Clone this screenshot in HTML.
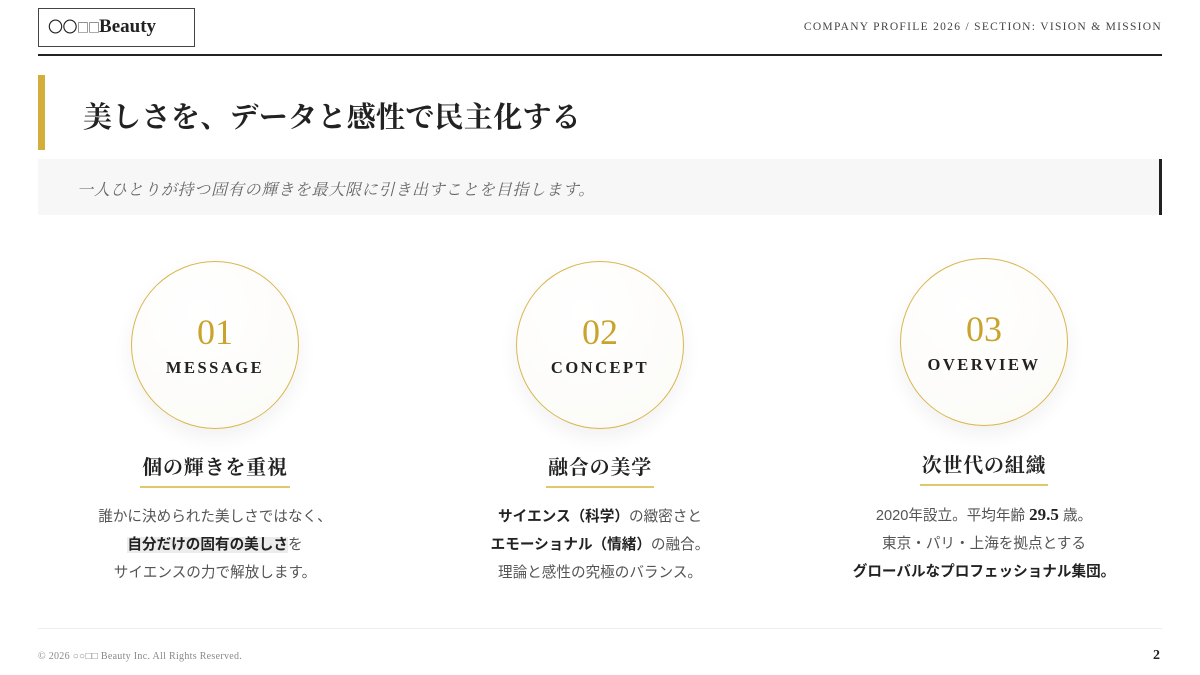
<!DOCTYPE html>
<html><head><meta charset="utf-8"><style>
*{margin:0;padding:0;box-sizing:border-box}
body{width:1200px;height:675px;background:#fff;position:relative;overflow:hidden;font-family:"Liberation Serif","Noto Serif CJK SC",serif;color:#222}
.a{position:absolute}
.logo{left:38px;top:8px;width:157px;height:39px;border:1px solid #444;font-size:19px;font-weight:bold;line-height:36px;padding-left:9px;color:#222;white-space:nowrap}
.logo .o{font-family:"Noto Sans CJK JP",sans-serif;font-weight:normal;font-size:15px;letter-spacing:-0.5px}
.logo .s{font-family:"Noto Sans CJK JP",sans-serif;font-weight:normal;font-size:12px;letter-spacing:-1px}
.hdr{right:38px;top:21px;font-size:11.5px;letter-spacing:1.3px;color:#444}
.hline{left:38px;top:54px;width:1124px;height:2px;background:#222}
.gbar{left:38px;top:75px;width:7px;height:75px;background:#d4ae3b}
.title{left:83px;top:95px;font-size:29px;font-weight:bold;letter-spacing:0.3px;color:#222}
.band{left:38px;top:159px;width:1124px;height:56px;background:#f7f7f7}
.band:after{content:"";position:absolute;right:0;top:0;width:3px;height:56px;background:#222}
.sub{left:77px;top:177px;font-size:16px;font-style:italic;color:#666;letter-spacing:0.75px}
.c{width:168px;height:168px;border-radius:50%;border:1.5px solid #d8b74f;background:radial-gradient(circle at 40% 30%,#fff,#fbfaf6);box-shadow:0 8px 20px rgba(0,0,0,0.06);text-align:center}
.num{position:absolute;left:0;right:0;top:52px;font-size:36px;color:#c9a32c;line-height:1}
.lab{position:absolute;left:0;right:0;top:98px;font-size:16.5px;letter-spacing:2.5px;color:#222;font-weight:bold;line-height:1}
.col{width:360px;text-align:center}
.h{font-size:20px;font-weight:bold;letter-spacing:0.8px;display:inline-block;padding:0 2px 5px;border-bottom:2px solid #e0c770;line-height:26px;color:#222}
.body{margin-top:15px;font-family:"Liberation Sans","Noto Sans CJK JP",sans-serif;font-size:14.6px;line-height:28px;color:#555}
.body b{color:#222}
.hl{background:#ececec}
.fline{left:38px;top:628px;width:1124px;height:1px;background:#eee}
.foot{left:38px;top:651px;font-size:10px;color:#888;letter-spacing:0.3px}
.pg{right:40px;top:648px;font-size:14px;font-weight:bold;color:#222}
</style></head><body>
<div class="a logo"><span class="o">〇〇</span><span class="s">□□</span>Beauty</div>
<div class="a hdr">COMPANY PROFILE 2026 / SECTION: VISION &amp; MISSION</div>
<div class="a hline"></div>
<div class="a gbar"></div>
<div class="a title">美しさを、データと感性で民主化する</div>
<div class="a band"></div>
<div class="a sub">一人ひとりが持つ固有の輝きを最大限に引き出すことを目指します。</div>

<div class="a c" style="left:131px;top:261px"><div class="num">01</div><div class="lab">MESSAGE</div></div>
<div class="a c" style="left:516px;top:261px"><div class="num">02</div><div class="lab">CONCEPT</div></div>
<div class="a c" style="left:900px;top:258px"><div class="num">03</div><div class="lab">OVERVIEW</div></div>

<div class="a col" style="left:35px;top:455px"><div class="h">個の輝きを重視</div>
<div class="body">誰かに決められた美しさではなく、<br><b class="hl">自分だけの固有の美しさ</b>を<br>サイエンスの力で解放します。</div></div>
<div class="a col" style="left:420px;top:455px"><div class="h">融合の美学</div>
<div class="body"><b>サイエンス（科学）</b>の緻密さと<br><b>エモーショナル（情緒）</b>の融合。<br>理論と感性の究極のバランス。</div></div>
<div class="a col" style="left:804px;top:453px"><div class="h">次世代の組織</div>
<div class="body">2020年設立。平均年齢 <b style="font-family:'Liberation Serif',serif;font-size:17px">29.5</b> 歳。<br>東京・パリ・上海を拠点とする<br><b>グローバルなプロフェッショナル集団。</b></div></div>

<div class="a fline"></div>
<div class="a foot">© 2026 ○○□□ Beauty Inc. All Rights Reserved.</div>
<div class="a pg">2</div>
</body></html>
